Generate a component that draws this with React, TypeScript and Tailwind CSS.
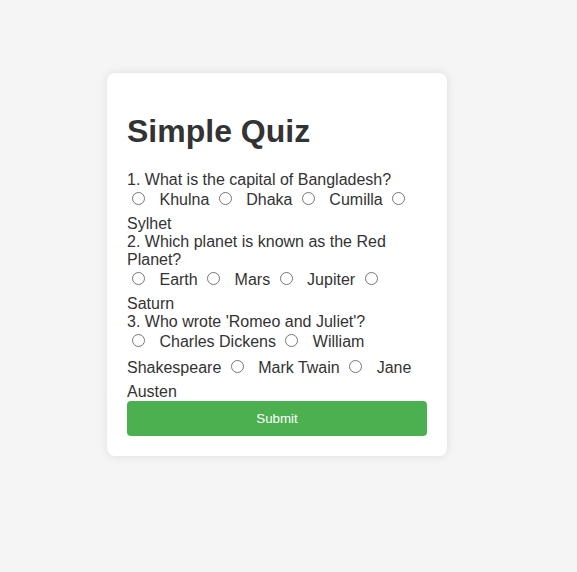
import { Fragment } from "react";

const questions = [
  {
    q: "1. What is the capital of Bangladesh?",
    name: "q1",
    options: ["Khulna", "Dhaka", "Cumilla", "Sylhet"],
  },
  {
    q: "2. Which planet is known as the Red Planet?",
    name: "q2",
    options: ["Earth", "Mars", "Jupiter", "Saturn"],
  },
  {
    q: "3. Who wrote 'Romeo and Juliet'?",
    name: "q3",
    options: ["Charles Dickens", "William Shakespeare", "Mark Twain", "Jane Austen"],
  },
];

export default function App() {
  return (
    <div className="min-h-screen bg-[#f5f5f5] pt-[73px] pl-[107px] font-['Liberation_Sans',Arial,sans-serif] text-[16px] leading-[normal] text-[#333]">
      <div className="w-[340px] rounded-lg bg-white p-5 shadow-[0_0_10px_rgba(0,0,0,0.1)]">
        <h1 className="mt-5 mb-[21px] text-[32px] font-bold">Simple Quiz</h1>
        <form>
          {questions.map((item) => (
            <div key={item.name}>
              <p>{item.q}</p>
              <div>
                {item.options.map((o) => (
                  <Fragment key={o}>
                    <input
                      type="radio"
                      name={item.name}
                      value={o}
                      className="mt-[3px] mr-[10px] mb-[10px] ml-[5px]"
                    />{" "}
                    {o}{" "}
                  </Fragment>
                ))}
              </div>
            </div>
          ))}
          <button
            type="button"
            className="block w-full rounded bg-[#4caf50] py-2.5 text-[13.333px] text-white"
          >
            Submit
          </button>
        </form>
      </div>
    </div>
  );
}
